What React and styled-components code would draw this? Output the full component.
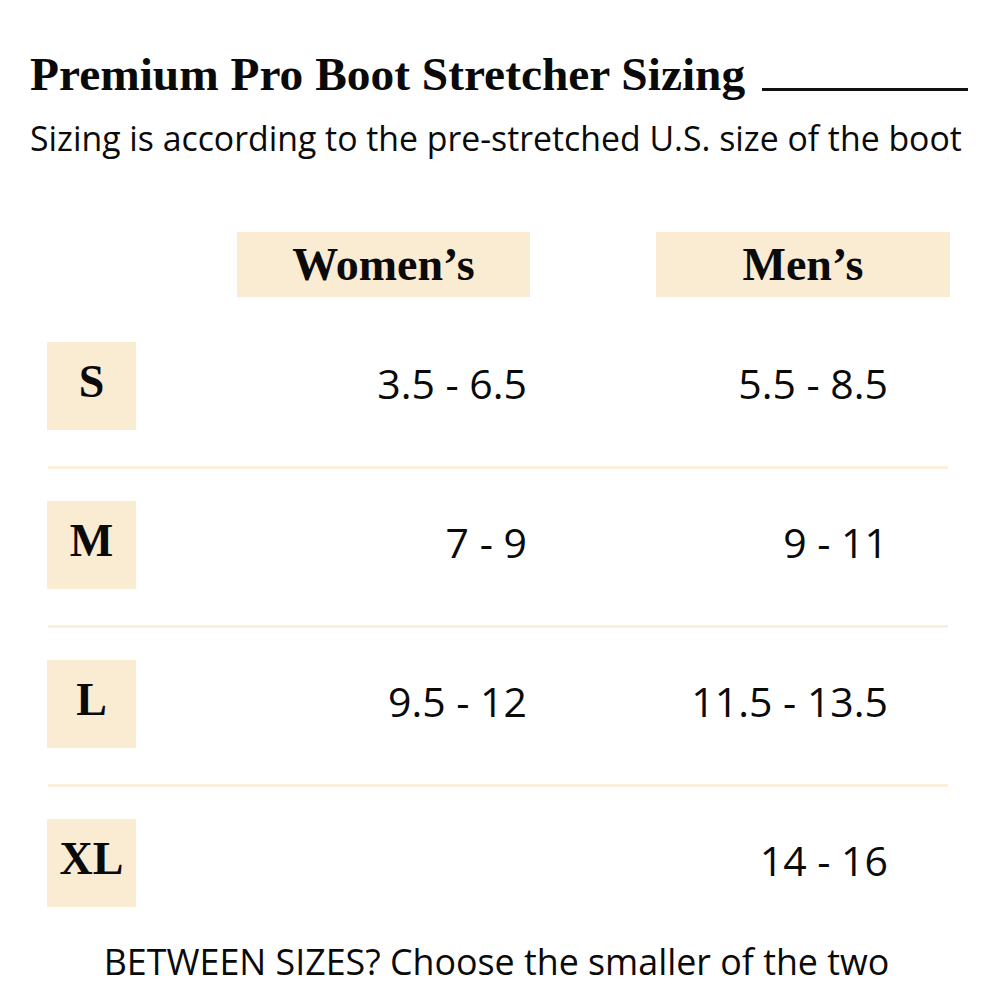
import React from 'react';
import styled, { createGlobalStyle } from 'styled-components';

const GlobalStyle = createGlobalStyle`
  html, body {
    margin: 0;
    padding: 0;
    background: #ffffff;
  }
  body {
    width: 1000px;
    height: 1000px;
    overflow: hidden;
  }
`;

const CREAM = '#faebd3';

const Page = styled.div`
  box-sizing: border-box;
  width: 1000px;
  height: 1000px;
  padding: 51px 32px 0 30px;
  color: #0a0a0a;
`;

const TitleRow = styled.div`
  display: flex;
  align-items: flex-end;
`;

const Title = styled.h1`
  margin: 0;
  font-family: "Liberation Serif", "Times New Roman", serif;
  font-weight: 700;
  font-size: 47.4px;
  line-height: 47px;
  white-space: nowrap;
`;

const TitleRule = styled.div`
  flex: 1;
  margin: 0 0 7px 17px;
  border-bottom: 3px solid #111;
`;

const Subtitle = styled.p`
  margin: 23px 0 0;
  font-family: "Open Sans", "Liberation Sans", sans-serif;
  font-size: 33.8px;
  line-height: 34px;
  white-space: nowrap;
`;

const Table = styled.div`
  display: flex;
  flex-direction: column;
  width: 903px;
  margin: 77px 0 0 17px;
`;

const Grid = styled.div`
  display: grid;
  grid-template-columns: 190px 293px 126px 294px;
  align-items: center;
  margin-top: ${p => p.$top || 0}px;
`;

const HeadCell = styled.div`
  grid-column: ${p => p.$col};
  height: 65px;
  background: ${CREAM};
  display: flex;
  align-items: center;
  justify-content: center;
  font-family: "Liberation Serif", "Times New Roman", serif;
  font-weight: 700;
  font-size: 46px;
  line-height: 46px;
`;

const SizeBox = styled.div`
  grid-column: 1;
  box-sizing: border-box;
  width: 89px;
  height: 88px;
  padding-bottom: 8px;
  background: ${CREAM};
  display: flex;
  align-items: center;
  justify-content: center;
  font-family: "Liberation Serif", "Times New Roman", serif;
  font-weight: 700;
  font-size: 46px;
  line-height: 46px;
`;

const Value = styled.div`
  grid-column: ${p => p.$col};
  padding-right: ${p => p.$pad}px;
  margin-bottom: 7px;
  text-align: right;
  font-family: "Open Sans", "Liberation Sans", sans-serif;
  font-size: 41px;
  line-height: 42px;
  white-space: nowrap;
`;

const Divider = styled.div`
  height: 3px;
  width: 900px;
  margin: 36px 0 0 1px;
  background: #fcefdc;
`;

const Footer = styled.p`
  margin: 37px 0 0 -4px;
  text-align: center;
  font-family: "Open Sans", "Liberation Sans", sans-serif;
  font-size: 35.8px;
  line-height: 35px;
  white-space: nowrap;
`;

const sizes = [
  { label: 'S', women: '3.5 - 6.5', men: '5.5 - 8.5' },
  { label: 'M', women: '7 - 9', men: '9 - 11' },
  { label: 'L', women: '9.5 - 12', men: '11.5 - 13.5' },
  { label: 'XL', women: '', men: '14 - 16' },
];

function SizeRow({ size, top }) {
  return (
    <Grid $top={top}>
      <SizeBox>{size.label}</SizeBox>
      <Value $col={2} $pad={3}>{size.women}</Value>
      <Value $col={4} $pad={62}>{size.men}</Value>
    </Grid>
  );
}

export default function App() {
  return (
    <>
      <GlobalStyle />
      <Page>
        <TitleRow>
          <Title>Premium Pro Boot Stretcher Sizing</Title>
          <TitleRule />
        </TitleRow>
        <Subtitle>Sizing is according to the pre-stretched U.S. size of the boot</Subtitle>
        <Table>
          <Grid>
            <HeadCell $col={2}>Women’s</HeadCell>
            <HeadCell $col={4}>Men’s</HeadCell>
          </Grid>
          {sizes.map((s, i) => (
            <React.Fragment key={s.label}>
              {i > 0 && <Divider />}
              <SizeRow size={s} top={i === 0 ? 45 : 32} />
            </React.Fragment>
          ))}
          <Footer>BETWEEN SIZES? Choose the smaller of the two</Footer>
        </Table>
      </Page>
    </>
  );
}
